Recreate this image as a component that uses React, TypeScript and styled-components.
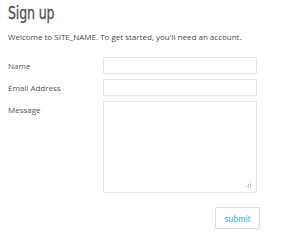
import React from "react";
import styled, { createGlobalStyle } from "styled-components";

const Global = createGlobalStyle`
  html, body { margin: 0; padding: 0; background: #fff; }
  body { font-family: "Open Sans", sans-serif; }
`;

const Page = styled.div`
  width: 300px;
  height: 244px;
  box-sizing: border-box;
  padding: 2px 8px 0 8px;
  display: flex;
  flex-direction: column;
`;

const Title = styled.h1`
  margin: 0;
  font-family: "DejaVu Sans", sans-serif;
  font-weight: normal;
  font-size: 17px;
  line-height: 22px;
  color: #4f4f4f;
  transform: scaleX(0.74);
  transform-origin: left center;
  letter-spacing: -0.2px;
  -webkit-text-stroke: 0.3px #4f4f4f;
`;

const Intro = styled.p`
  margin: 7px 0 0 0;
  font-size: 8px;
  line-height: 12px;
  color: #4a4a4a;
`;

const Form = styled.form`
  margin-top: 14px;
  display: grid;
  grid-template-columns: 95px 154px;
  row-gap: 5px;
  align-items: start;
`;

const Label = styled.label`
  font-size: 8px;
  line-height: 17px;
  color: #555;
`;

const Input = styled.input`
  box-sizing: border-box;
  width: 154px;
  height: 17px;
  border: 1px solid #e6e6e6;
  border-radius: 1px;
  padding: 0 4px;
  margin: 0;
  background: #fff;
  outline: none;
`;

const AreaWrap = styled.div`
  position: relative;
  width: 154px;
  height: 92px;
`;

const TextArea = styled.textarea`
  box-sizing: border-box;
  width: 154px;
  height: 92px;
  border: 1px solid #e6e6e6;
  border-radius: 1px;
  padding: 3px;
  margin: 0;
  background: #fff;
  outline: none;
  display: block;
  resize: none;
`;

const Grip = styled.svg`
  position: absolute;
  right: 5px;
  bottom: 5px;
  width: 6px;
  height: 6px;
`;

const Actions = styled.div`
  grid-column: 1 / span 2;
  display: flex;
  justify-content: flex-end;
  margin-top: 9px;
  width: 252px;
`;

const Submit = styled.button`
  box-sizing: border-box;
  width: 45px;
  height: 22px;
  border: 1px solid #dedede;
  border-radius: 1px;
  background: #fff;
  color: #5ab8ee;
  font-family: "Open Sans", sans-serif;
  font-weight: 600;
  font-size: 8px;
  letter-spacing: -0.2px;
  padding: 0;
`;

export default function App() {
  return (
    <>
      <Global />
      <Page>
        <Title>Sign up</Title>
        <Intro>Welcome to SITE_NAME. To get started, you'll need an account.</Intro>
        <Form onSubmit={(e) => e.preventDefault()}>
          <Label htmlFor="name">Name</Label>
          <Input id="name" />
          <Label htmlFor="email">Email Address</Label>
          <Input id="email" />
          <Label htmlFor="msg">Message</Label>
          <AreaWrap>
            <TextArea id="msg" />
            <Grip viewBox="0 0 6 6">
              <rect x="4" y="0" width="1" height="1" fill="#aaa" />
              <rect x="2" y="2" width="1" height="1" fill="#aaa" />
              <rect x="4" y="2" width="1" height="1" fill="#aaa" />
              <rect x="0" y="4" width="1" height="1" fill="#aaa" />
              <rect x="2" y="4" width="1" height="1" fill="#aaa" />
              <rect x="4" y="4" width="1" height="1" fill="#aaa" />
            </Grip>
          </AreaWrap>
          <Actions>
            <Submit type="submit">submit</Submit>
          </Actions>
        </Form>
      </Page>
    </>
  );
}
